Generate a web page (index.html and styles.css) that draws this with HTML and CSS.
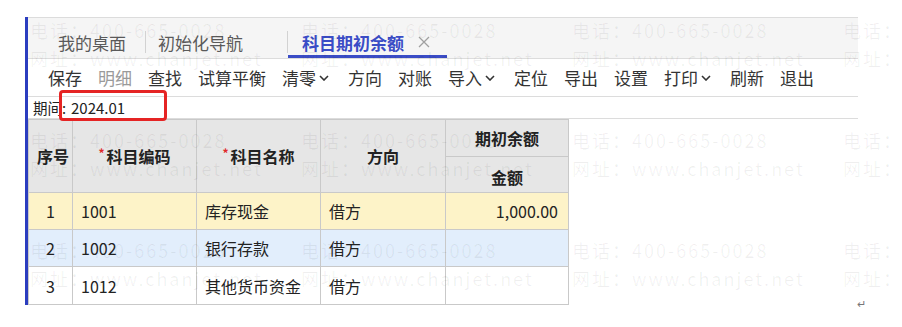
FILE: index.html
```html
<!DOCTYPE html>
<html lang="zh-CN">
<head>
    <meta charset="UTF-8">
    <meta name="viewport" content="width=device-width, initial-scale=1.0">
    <title>科目期初余额</title>
    <link rel="stylesheet" href="styles.css">
</head>
<body>
    <div class="page">
        <div class="frame">
            <div class="tabbar">
                <div class="tab tab-home">我的桌面</div>
                <span class="tab-sep"></span>
                <div class="tab">初始化导航<span class="tab-close hidden"></span></div>
                <span class="tab-sep"></span>
                <div class="tab active">科目期初余额
                    <svg class="tab-close" viewBox="0 0 12 12" width="12" height="12">
                        <path d="M1 1 L11 11 M11 1 L1 11" stroke="#a0a0a0" stroke-width="1.3" fill="none"/>
                    </svg>
                </div>
            </div>

            <div class="toolbar">
                <span class="tool">保存</span>
                <span class="tool disabled">明细</span>
                <span class="tool">查找</span>
                <span class="tool">试算平衡</span>
                <span class="tool">清零<svg class="caret" viewBox="0 0 10 6" width="10" height="6"><path d="M1 1 L5 5 L9 1" stroke="#333" stroke-width="1.6" fill="none"/></svg></span>
                <span class="tool">方向</span>
                <span class="tool">对账</span>
                <span class="tool">导入<svg class="caret" viewBox="0 0 10 6" width="10" height="6"><path d="M1 1 L5 5 L9 1" stroke="#333" stroke-width="1.6" fill="none"/></svg></span>
                <span class="tool">定位</span>
                <span class="tool">导出</span>
                <span class="tool">设置</span>
                <span class="tool">打印<svg class="caret" viewBox="0 0 10 6" width="10" height="6"><path d="M1 1 L5 5 L9 1" stroke="#333" stroke-width="1.6" fill="none"/></svg></span>
                <span class="tool">刷新</span>
                <span class="tool">退出</span>
            </div>

            <div class="period">
                <span class="period-label">期间:</span>
                <span class="period-value">2024.01</span>
            </div>

            <table class="grid">
                <colgroup>
                    <col style="width:44px">
                    <col style="width:124px">
                    <col style="width:124px">
                    <col style="width:125px">
                    <col style="width:123px">
                </colgroup>
                <thead>
                    <tr class="head-top">
                        <th rowspan="2">序号</th>
                        <th rowspan="2"><span class="req">*</span>科目编码</th>
                        <th rowspan="2"><span class="req">*</span>科目名称</th>
                        <th rowspan="2">方向</th>
                        <th>期初余额</th>
                    </tr>
                    <tr class="head-sub">
                        <th>金额</th>
                    </tr>
                </thead>
                <tbody>
                    <tr class="row-current">
                        <td class="num">1</td>
                        <td>1001</td>
                        <td>库存现金</td>
                        <td>借方</td>
                        <td class="money">1,000.00</td>
                    </tr>
                    <tr class="row-hover">
                        <td class="num">2</td>
                        <td>1002</td>
                        <td>银行存款</td>
                        <td>借方</td>
                        <td class="money"></td>
                    </tr>
                    <tr class="row-last">
                        <td class="num">3</td>
                        <td>1012</td>
                        <td>其他货币资金</td>
                        <td>借方</td>
                        <td class="money"></td>
                    </tr>
                </tbody>
            </table>
        </div>
        <div class="para-mark">↵</div>

        <!-- 标注框 -->
        <div class="mark-box"></div>

        <!-- 水印 -->
        <div class="watermark">
            <div class="wm"><div>电话：400-665-0028</div><div>网址：www.chanjet.net</div></div>
            <div class="wm"><div>电话：400-665-0028</div><div>网址：www.chanjet.net</div></div>
            <div class="wm"><div>电话：400-665-0028</div><div>网址：www.chanjet.net</div></div>
            <div class="wm"><div>电话：400-665-0028</div><div>网址：www.chanjet.net</div></div>
            <div class="wm"><div>电话：400-665-0028</div><div>网址：www.chanjet.net</div></div>
            <div class="wm"><div>电话：400-665-0028</div><div>网址：www.chanjet.net</div></div>
            <div class="wm"><div>电话：400-665-0028</div><div>网址：www.chanjet.net</div></div>
            <div class="wm"><div>电话：400-665-0028</div><div>网址：www.chanjet.net</div></div>
            <div class="wm"><div>电话：400-665-0028</div><div>网址：www.chanjet.net</div></div>
            <div class="wm"><div>电话：400-665-0028</div><div>网址：www.chanjet.net</div></div>
            <div class="wm"><div>电话：400-665-0028</div><div>网址：www.chanjet.net</div></div>
            <div class="wm"><div>电话：400-665-0028</div><div>网址：www.chanjet.net</div></div>
        </div>
    </div>
</body>
</html>
```

FILE: styles.css
```css
* {
    box-sizing: border-box;
}
body {
    margin: 0;
    background: #fff;
    font-family: "Noto Sans CJK SC", "Noto Sans", sans-serif;
    color: #333;
    overflow: hidden;
}
.page {
    position: relative;
    width: 902px;
    height: 327px;
    padding-top: 17px;
}
.frame {
    margin-left: 25px;
    width: 833px;
    border-left: 3px solid #2b3dbf;
}

/* 页签 */
.tabbar {
    display: flex;
    align-items: center;
    height: 42px;
    border-top: 1px solid #dcdcdc;
    border-bottom: 1px solid #dcdcdc;
    background: #f5f5f5;
    font-size: 17px;
    color: #5a5a5a;
}
.tab {
    display: flex;
    align-items: center;
    gap: 14px;
    height: 40px;
    padding: 8px 18px 0 12px;
    line-height: 1;
}
.tab-home {
    padding-left: 30px;
    padding-right: 19px;
}
.tab.active {
    padding-left: 14px;
    padding-right: 17px;
    color: #3a4cc6;
    font-weight: bold;
    box-shadow: inset 0 -3px 0 #3a4cc6;
}
.tab-close {
    display: inline-block;
    width: 12px;
    height: 12px;
}
.hidden {
    visibility: hidden;
}
.tab-sep {
    width: 1px;
    height: 22px;
    margin-top: 8px;
    background: #d2d2d2;
}

/* 工具栏 */
.toolbar {
    display: flex;
    align-items: center;
    gap: 16px;
    height: 38px;
    padding-left: 20px;
    border-bottom: 1px solid #dcdcdc;
    font-size: 17px;
    color: #333;
}
.tool {
    display: flex;
    align-items: center;
    line-height: 1;
}
.tool.disabled {
    color: #9a9a9a;
}
.caret {
    margin: 1px 3px 0 3px;
}

/* 期间 */
.period {
    display: flex;
    align-items: center;
    height: 22px;
    padding-left: 5px;
    border-bottom: 1px solid #dcdcdc;
    font-size: 14.5px;
    color: #222;
}
.period-label {
    margin-right: 5px;
}
.period-value {
    font-size: 15px;
}

/* 表格 */
.grid {
    border-collapse: collapse;
    table-layout: fixed;
    width: 540px;
    font-size: 16px;
    color: #222;
}
.grid th,
.grid td {
    border: 1px solid #c9c9c9;
    padding: 0 8px;
    white-space: nowrap;
}
.grid th {
    background: #e6e6e6;
    font-weight: bold;
    text-align: center;
}
.head-top th {
    height: 37px;
}
.head-sub th {
    height: 36px;
    padding-top: 4px;
}
.grid td {
    height: 37px;
    text-align: left;
}
.grid td.num {
    text-align: center;
    padding: 0;
}
.grid td.money {
    text-align: right;
    padding-right: 10px;
}
.row-current td {
    background: #fdf3c8;
}
.row-hover td {
    background: #e2eefc;
}
.row-last td {
    height: 38px;
}
.req {
    color: #e02a2a;
    font-size: 12px;
    vertical-align: top;
    margin-right: 2px;
}

.para-mark {
    margin-top: -8px;
    padding-left: 857px;
    font-size: 11px;
    line-height: 12px;
    color: #777;
}

/* 红色标注框 */
.mark-box {
    position: absolute;
    left: 59px;
    top: 90px;
    width: 108px;
    height: 31px;
    border: 3px solid #e52424;
    border-radius: 4px;
}

/* 水印 */
.watermark {
    position: absolute;
    left: 30px;
    top: 16px;
    right: 0;
    bottom: 0;
    display: grid;
    grid-template-columns: repeat(4, 271px);
    grid-auto-rows: 110px;
    overflow: hidden;
    pointer-events: none;
    color: rgba(0, 0, 0, 0.06);
    font-size: 18px;
    letter-spacing: 2px;
    line-height: 28px;
    white-space: nowrap;
}
```
